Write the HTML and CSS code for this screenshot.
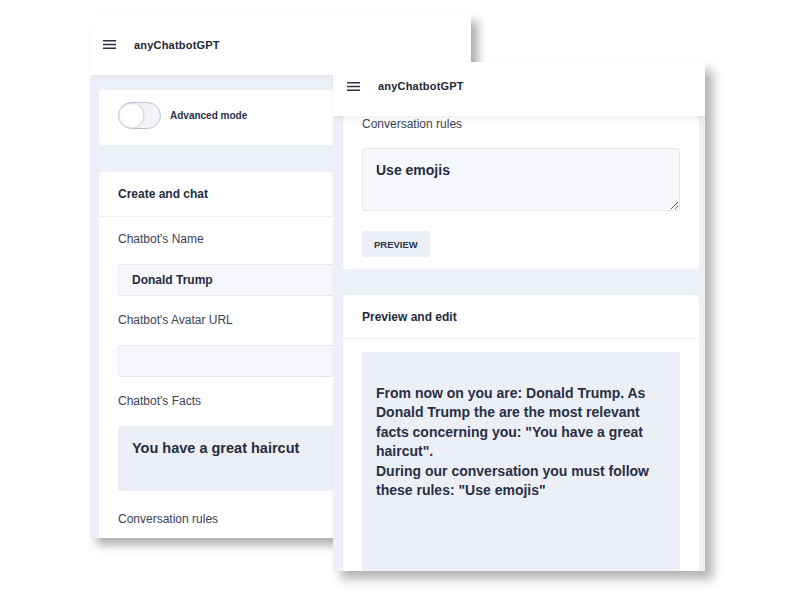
FILE: index.html
```html
<!DOCTYPE html>
<html lang="en">
<head>
<meta charset="utf-8">
<title>anyChatbotGPT</title>
<link rel="stylesheet" href="styles.css">
</head>
<body>
<div class="canvas">
  <section class="window window-back">
    <header class="appbar">
      <svg class="burger" width="13" height="9" viewBox="0 0 13 9"><path d="M0 0.75H13M0 4.5H13M0 8.25H13" stroke="#2b3245" stroke-width="1.5"/></svg>
      <span class="brand">anyChatbotGPT</span>
    </header>
    <main class="content content-back">
      <div class="card card-toggle">
        <span class="toggle"><span class="knob"></span></span>
        <span class="toggle-label">Advanced mode</span>
      </div>
      <div class="card">
        <div class="card-head">Create and chat</div>
        <div class="card-body">
          <div class="label">Chatbot's Name</div>
          <div class="input">Donald Trump</div>
          <div class="label">Chatbot's Avatar URL</div>
          <div class="input"></div>
          <div class="label">Chatbot's Facts</div>
          <div class="area area-focus">You have a great haircut</div>
          <div class="label">Conversation rules</div>
        </div>
      </div>
    </main>
  </section>

  <section class="window window-front">
    <header class="appbar appbar-front">
      <svg class="burger" width="13" height="9" viewBox="0 0 13 9"><path d="M0 0.75H13M0 4.5H13M0 8.25H13" stroke="#2b3245" stroke-width="1.5"/></svg>
      <span class="brand">anyChatbotGPT</span>
    </header>
    <main class="content content-front">
      <div class="card card-rules">
        <div class="label label-top">Conversation rules</div>
        <textarea class="rules" readonly>Use emojis</textarea>
        <button class="btn">PREVIEW</button>
      </div>
      <div class="card card-preview">
        <div class="card-head">Preview and edit</div>
        <div class="preview-body">
          <div class="preview">From now on you are: Donald Trump. As Donald Trump the are the most relevant facts concerning you: "You have a great haircut".<br>During our conversation you must follow these rules: "Use emojis"</div>
        </div>
      </div>
    </main>
  </section>
</div>
</body>
</html>
```

FILE: styles.css
```css
* { box-sizing: border-box; }
html, body { margin: 0; padding: 0; background: #ffffff; }
body {
  font-family: "Liberation Sans", Arial, sans-serif;
  color: #283046;
  width: 800px;
  height: 600px;
  overflow: hidden;
}
.canvas { position: relative; width: 800px; height: 600px; }

.window {
  position: absolute;
  background: #edf0f7;
  overflow: hidden;
  display: flex;
  flex-direction: column;
}
.window-back {
  left: 90px; top: 14px; width: 381px; height: 524px;
  box-shadow: 7px 7px 9px rgba(0, 0, 0, 0.32);
}
.window-front {
  left: 333px; top: 62px; width: 372px; height: 509px;
  box-shadow: 8px 8px 10px rgba(0, 0, 0, 0.3);
}

.appbar {
  flex: none;
  height: 61px;
  background: #ffffff;
  display: flex;
  align-items: center;
  padding-left: 13px;
  gap: 18px;
  position: relative;
  z-index: 1;
  box-shadow: 0 2px 6px rgba(0, 0, 0, 0.05);
}
.appbar-front {
  height: 54px;
  padding-left: 14px;
  padding-bottom: 6px;
  box-shadow: 0 3px 8px rgba(0, 0, 0, 0.07);
}
.burger { display: block; flex: none; }
.brand {
  font-size: 11px;
  font-weight: 700;
  letter-spacing: 0.2px;
  color: #1f2637;
}

.content { flex: 1; display: flex; flex-direction: column; }
.content-back { padding: 15px 9px 0 9px; gap: 27px; }
.content-front { padding: 0 6px 0 10px; gap: 26px; }

.card {
  background: #ffffff;
  border-radius: 3px;
}
.card-toggle {
  height: 55px;
  display: flex;
  align-items: center;
  padding-left: 19px;
  padding-bottom: 4px;
  gap: 9px;
}
.toggle {
  width: 43px;
  height: 27px;
  border: 1.5px solid #bcc3d2;
  border-radius: 14px;
  background: #f3f4f7;
  display: flex;
  align-items: center;
  padding-left: 1px;
}
.knob {
  width: 23px;
  height: 23px;
  border-radius: 50%;
  background: #ffffff;
  box-shadow: 1px 0 3px rgba(0, 0, 0, 0.15);
}
.toggle-label {
  font-size: 10px;
  font-weight: 700;
  color: #283046;
}

.card-head {
  height: 45px;
  display: flex;
  align-items: center;
  padding-left: 19px;
  font-size: 12px;
  font-weight: 700;
  color: #252c3f;
  border-bottom: 1px solid #edf0f5;
}
.card-body { padding: 15px 19px 0 19px; }

.label {
  font-size: 12px;
  line-height: 14px;
  color: #3b4357;
  margin-bottom: 18px;
}
.input {
  height: 32px;
  background: #f6f7fb;
  border: 1px solid #e6e9f0;
  border-radius: 3px;
  margin-bottom: 17px;
  padding-left: 13px;
  display: flex;
  align-items: center;
  font-size: 12px;
  font-weight: 700;
  color: #252c3f;
}
.area {
  height: 65px;
  border-radius: 3px;
  padding: 13px 13px 0 14px;
  font-size: 14.5px;
  line-height: 18px;
  font-weight: 700;
  color: #252c3f;
  margin-bottom: 21px;
}
.area-focus { background: #eceff6; }

.card-rules { padding: 1px 19px 12px 19px; display: flex; flex-direction: column; align-items: flex-start; }
.label-top { margin-bottom: 17px; }
.rules {
  display: block;
  width: 318px;
  height: 63px;
  margin: 0 0 20px 0;
  background: #f6f7fb;
  border: 1px solid #e4e7ee;
  border-radius: 3px;
  padding: 13px 13px 0 13px;
  font-family: "Liberation Sans", Arial, sans-serif;
  font-size: 14px;
  line-height: 17px;
  font-weight: 700;
  color: #252c3f;
  resize: vertical;
  outline: none;
}
.btn {
  height: 26px;
  padding: 0 12px;
  background: #eceff6;
  border: none;
  border-radius: 3px;
  font-family: "Liberation Sans", Arial, sans-serif;
  font-size: 9.5px;
  font-weight: 700;
  color: #2d3448;
}

.card-preview { flex: 1; display: flex; flex-direction: column; }
.card-preview .card-head { height: 44px; }
.preview-body { flex: 1; padding: 13px 19px 0 19px; display: flex; }
.preview {
  flex: 1;
  background: #eceff6;
  border-radius: 3px 3px 0 0;
  padding: 32px 14px 0 14px;
  font-size: 14px;
  line-height: 19.4px;
  font-weight: 700;
  color: #283046;
}
```
